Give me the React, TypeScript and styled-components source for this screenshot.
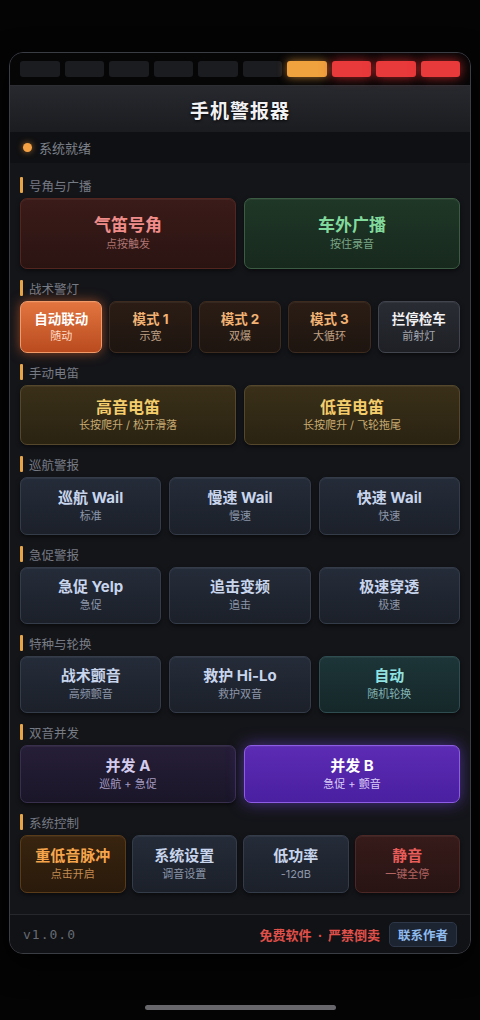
import React from 'react';
import styled, { createGlobalStyle } from 'styled-components';

const GlobalStyle = createGlobalStyle`
  html, body {
    margin: 0;
    background: #040405;
  }
  body {
    font-family: Inter, "Noto Sans CJK SC", "Noto Sans", sans-serif;
    -webkit-font-smoothing: antialiased;
  }
  * { box-sizing: border-box; }
`;

type Tone =
  | 'horn'
  | 'broadcast'
  | 'active'
  | 'mode'
  | 'stop'
  | 'gold'
  | 'slate'
  | 'teal'
  | 'violet'
  | 'violetOn'
  | 'bass'
  | 'mute';

type Palette = { top: string; bottom: string; border: string; title: string; sub: string; glow?: string };

const tones: Record<Tone, Palette> = {
  horn: { top: '#3a1b19', bottom: '#2a1412', border: '#52261f', title: '#f08d8a', sub: '#ad7471' },
  broadcast: { top: '#1f3727', bottom: '#17291d', border: '#3b5b43', title: '#82d99c', sub: '#7aa585' },
  active: {
    top: '#e2753f',
    bottom: '#b94b1f',
    border: '#f29a68',
    title: '#ffffff',
    sub: '#ffdcc6',
    glow: '0 0 12px rgba(240, 110, 50, 0.55)',
  },
  mode: { top: '#2b1d15', bottom: '#1e1510', border: '#3d2b1f', title: '#f1b274', sub: '#bfa186' },
  stop: { top: '#292c33', bottom: '#1e2025', border: '#42454e', title: '#f2f2f4', sub: '#a3a6ae' },
  gold: { top: '#3a3019', bottom: '#2a2312', border: '#54472b', title: '#f3cd6c', sub: '#c7ab72' },
  slate: { top: '#252c39', bottom: '#1b2029', border: '#343c4a', title: '#c8d5ec', sub: '#8c96a8' },
  teal: { top: '#1d3538', bottom: '#152729', border: '#2f4d51', title: '#90e2e2', sub: '#82b2b2' },
  violet: { top: '#261e38', bottom: '#1a1628', border: '#372f4c', title: '#d3cbec', sub: '#a39bc2' },
  violetOn: {
    top: '#5c2cb4',
    bottom: '#4a1fa0',
    border: '#8d5de4',
    title: '#ffffff',
    sub: '#d9cbf7',
    glow: '0 0 16px rgba(130, 80, 255, 0.5)',
  },
  bass: { top: '#38240f', bottom: '#2a1a0b', border: '#5a3b19', title: '#f6a54c', sub: '#c28c52' },
  mute: { top: '#361b1a', bottom: '#281413', border: '#4b2725', title: '#e85c5a', sub: '#b16462' },
};

const Page = styled.div`
  padding: 52px 9px 0;
`;

const Device = styled.div`
  width: 462px;
  border: 1px solid #3b3d44;
  border-radius: 14px;
  overflow: hidden;
  background: #141519;
  box-shadow: 0 10px 30px rgba(0, 0, 0, 0.8);
`;

const LedStrip = styled.div`
  display: flex;
  gap: 5px;
  padding: 8px 10px;
  background: #060607;
`;

const Led = styled.div<{ $state: 'off' | 'warn' | 'alarm' }>`
  flex: 1;
  height: 16px;
  border-radius: 3px;
  background: ${(p) => (p.$state === 'off' ? '#1b1c20' : p.$state === 'warn' ? '#f0a23e' : '#e8393b')};
  box-shadow: ${(p) =>
    p.$state === 'off'
      ? 'none'
      : p.$state === 'warn'
        ? '0 0 10px rgba(245, 160, 60, 0.7)'
        : '0 0 12px rgba(240, 50, 50, 0.75)'};
`;

const Header = styled.div`
  height: 47px;
  display: flex;
  align-items: center;
  justify-content: center;
  background: linear-gradient(#27292e, #1b1c20);
  border-top: 1px solid #2c2e33;
`;

const Title = styled.h1`
  margin: 0;
  font-size: 19px;
  font-weight: 700;
  letter-spacing: 1px;
  color: #f2f2f4;
  text-shadow: 0 1px 3px rgba(0, 0, 0, 0.9);
`;

const StatusBar = styled.div`
  height: 31px;
  display: flex;
  align-items: center;
  gap: 7px;
  padding-left: 13px;
  background: #0f1013;
  font-size: 13px;
  color: #7d818a;
`;

const Dot = styled.span`
  width: 9px;
  height: 9px;
  border-radius: 50%;
  background: #f5a245;
  box-shadow: 0 0 6px rgba(245, 160, 60, 0.6);
`;

const Content = styled.div`
  display: flex;
  flex-direction: column;
  gap: 11px;
  padding: 14px 10px 21px;
`;

const Section = styled.section`
  display: flex;
  flex-direction: column;
  gap: 5px;
`;

const Label = styled.div`
  display: flex;
  align-items: center;
  gap: 6px;
  height: 16px;
  font-size: 12.5px;
  color: #777b84;
  &::before {
    content: '';
    width: 3px;
    height: 16px;
    border-radius: 1px;
    background: #e8a548;
  }
`;

const Row = styled.div<{ $cols: number; $gap: number; $h: number }>`
  display: grid;
  grid-template-columns: repeat(${(p) => p.$cols}, 1fr);
  gap: ${(p) => p.$gap}px;
  height: ${(p) => p.$h}px;
`;

const Btn = styled.div<{ $tone: Tone }>`
  display: flex;
  flex-direction: column;
  align-items: center;
  justify-content: center;
  gap: 1px;
  border-radius: 7px;
  border: 1px solid ${(p) => tones[p.$tone].border};
  background: linear-gradient(${(p) => tones[p.$tone].top}, ${(p) => tones[p.$tone].bottom});
  box-shadow: ${(p) => tones[p.$tone].glow ?? '0 2px 4px rgba(0, 0, 0, 0.5)'},
    inset 0 1px 0 rgba(255, 255, 255, 0.05);
`;

const BtnTitle = styled.div<{ $tone: Tone; $size: number }>`
  font-size: ${(p) => p.$size}px;
  font-weight: 700;
  line-height: 1.25;
  color: ${(p) => tones[p.$tone].title};
  white-space: nowrap;
`;

const BtnSub = styled.div<{ $tone: Tone }>`
  font-size: 11px;
  line-height: 1.3;
  color: ${(p) => tones[p.$tone].sub};
  white-space: nowrap;
`;

const Footer = styled.div`
  height: 39px;
  display: flex;
  align-items: center;
  padding: 0 13px 0 13px;
  border-top: 1px solid #25272c;
  background: #111215;
`;

const Version = styled.span`
  font-family: "DejaVu Sans Mono", "Liberation Mono", monospace;
  font-size: 13px;
  color: #666a73;
  letter-spacing: 1px;
`;

const Notice = styled.span`
  margin-left: auto;
  font-size: 13px;
  font-weight: 700;
  color: #e0504a;
`;

const Sep = styled.span`
  margin: 0 6px;
`;

const Contact = styled.div`
  margin-left: 9px;
  padding: 2px 8px;
  border-radius: 5px;
  border: 1px solid #2d3747;
  background: #1c2432;
  font-size: 12.5px;
  font-weight: 700;
  color: #8fbbee;
`;

const HomeBar = styled.div`
  width: 191px;
  height: 5px;
  border-radius: 3px;
  background: #68686c;
  margin: 51px auto 0;
`;

type Item = { title: string; sub: string; tone: Tone };
type Group = { label: string; cols: number; gap: number; h: number; size: number; items: Item[] };

const groups: Group[] = [
  {
    label: '号角与广播',
    cols: 2,
    gap: 8,
    h: 71,
    size: 17,
    items: [
      { title: '气笛号角', sub: '点按触发', tone: 'horn' },
      { title: '车外广播', sub: '按住录音', tone: 'broadcast' },
    ],
  },
  {
    label: '战术警灯',
    cols: 5,
    gap: 7,
    h: 52,
    size: 13.5,
    items: [
      { title: '自动联动', sub: '随动', tone: 'active' },
      { title: '模式 1', sub: '示宽', tone: 'mode' },
      { title: '模式 2', sub: '双爆', tone: 'mode' },
      { title: '模式 3', sub: '大循环', tone: 'mode' },
      { title: '拦停检车', sub: '前射灯', tone: 'stop' },
    ],
  },
  {
    label: '手动电笛',
    cols: 2,
    gap: 8,
    h: 60,
    size: 16,
    items: [
      { title: '高音电笛', sub: '长按爬升 / 松开滑落', tone: 'gold' },
      { title: '低音电笛', sub: '长按爬升 / 飞轮拖尾', tone: 'gold' },
    ],
  },
  {
    label: '巡航警报',
    cols: 3,
    gap: 8,
    h: 58,
    size: 15,
    items: [
      { title: '巡航 Wail', sub: '标准', tone: 'slate' },
      { title: '慢速 Wail', sub: '慢速', tone: 'slate' },
      { title: '快速 Wail', sub: '快速', tone: 'slate' },
    ],
  },
  {
    label: '急促警报',
    cols: 3,
    gap: 8,
    h: 57,
    size: 15,
    items: [
      { title: '急促 Yelp', sub: '急促', tone: 'slate' },
      { title: '追击变频', sub: '追击', tone: 'slate' },
      { title: '极速穿透', sub: '极速', tone: 'slate' },
    ],
  },
  {
    label: '特种与轮换',
    cols: 3,
    gap: 8,
    h: 57,
    size: 15,
    items: [
      { title: '战术颤音', sub: '高频颤音', tone: 'slate' },
      { title: '救护 Hi-Lo', sub: '救护双音', tone: 'slate' },
      { title: '自动', sub: '随机轮换', tone: 'teal' },
    ],
  },
  {
    label: '双音并发',
    cols: 2,
    gap: 8,
    h: 58,
    size: 15,
    items: [
      { title: '并发 A', sub: '巡航 + 急促', tone: 'violet' },
      { title: '并发 B', sub: '急促 + 颤音', tone: 'violetOn' },
    ],
  },
  {
    label: '系统控制',
    cols: 4,
    gap: 6,
    h: 58,
    size: 15,
    items: [
      { title: '重低音脉冲', sub: '点击开启', tone: 'bass' },
      { title: '系统设置', sub: '调音设置', tone: 'slate' },
      { title: '低功率', sub: '-12dB', tone: 'slate' },
      { title: '静音', sub: '一键全停', tone: 'mute' },
    ],
  },
];

const leds: Array<'off' | 'warn' | 'alarm'> = ['off', 'off', 'off', 'off', 'off', 'off', 'warn', 'alarm', 'alarm', 'alarm'];

export default function App() {
  return (
    <>
      <GlobalStyle />
      <Page>
        <Device>
          <LedStrip>
            {leds.map((s, i) => (
              <Led key={i} $state={s} />
            ))}
          </LedStrip>
          <Header>
            <Title>手机警报器</Title>
          </Header>
          <StatusBar>
            <Dot />
            系统就绪
          </StatusBar>
          <Content>
            {groups.map((g) => (
              <Section key={g.label}>
                <Label>{g.label}</Label>
                <Row $cols={g.cols} $gap={g.gap} $h={g.h}>
                  {g.items.map((it) => (
                    <Btn key={it.title} $tone={it.tone}>
                      <BtnTitle $tone={it.tone} $size={g.size}>
                        {it.title}
                      </BtnTitle>
                      <BtnSub $tone={it.tone}>{it.sub}</BtnSub>
                    </Btn>
                  ))}
                </Row>
              </Section>
            ))}
          </Content>
          <Footer>
            <Version>v1.0.0</Version>
            <Notice>
              免费软件<Sep>·</Sep>严禁倒卖
            </Notice>
            <Contact>联系作者</Contact>
          </Footer>
        </Device>
        <HomeBar />
      </Page>
    </>
  );
}
